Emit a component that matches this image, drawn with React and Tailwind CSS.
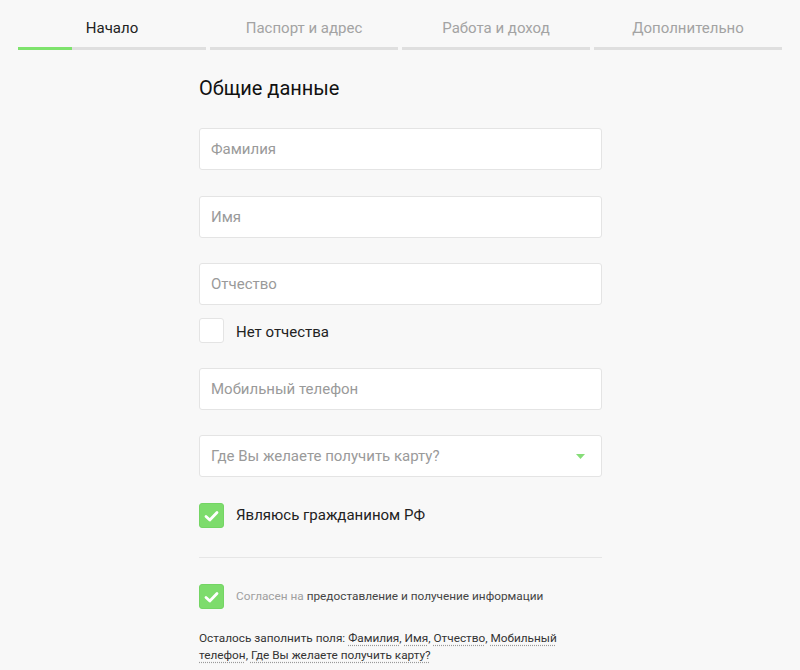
import { useState } from "react";

const tabs = ["Начало", "Паспорт и адрес", "Работа и доход", "Дополнительно"];

const Field = ({ placeholder, className = "" }) => (
    <input
        type="text"
        placeholder={placeholder}
        className={"block w-full h-[42px] bg-white border border-[#e4e4e4] rounded-[3px] px-[11px] text-[15px] text-[#222] placeholder:text-[#9a9a9a] outline-none " + className}
    />
);

const Check = ({ checked, onClick }) => (
    <button
        type="button"
        onClick={onClick}
        className={
            "w-[25px] h-[25px] rounded-[3px] border flex items-center justify-center shrink-0 " +
            (checked ? "bg-[#7ddc6c] border-[#74d564]" : "bg-white border-[#e4e4e4]")
        }
    >
        {checked && (
            <svg width="15" height="12" viewBox="0 0 15 12">
                <polyline points="2,6.5 5.8,10 13,2.5" fill="none" stroke="#fff" strokeWidth="2.8" strokeLinecap="round" strokeLinejoin="round" />
            </svg>
        )}
    </button>
);

const Dotted = ({ children }) => (
    <span className="text-[#333] underline decoration-dotted decoration-[#999] underline-offset-[3px]">{children}</span>
);

export default function App() {
    const [noMiddle, setNoMiddle] = useState(false);
    const [citizen, setCitizen] = useState(true);
    const [agree, setAgree] = useState(true);

    return (
        <div className="min-h-[670px] bg-[#f8f8f8] font-['Roboto','Liberation_Sans',sans-serif]">
            <div className="flex gap-[4px] px-[18px]">
                {tabs.map((t, i) => (
                    <div key={t} className="flex-1">
                        <div className={"text-center text-[15px] leading-[20px] pt-[18px] pb-[9px] " + (i === 0 ? "text-[#222]" : "text-[#a3a3a3]")}>
                            {t}
                        </div>
                        <div className="h-[3px] bg-[#dfdfdf]">
                            {i === 0 && <div className="h-full w-[54px] bg-[#7ee36d]" />}
                        </div>
                    </div>
                ))}
            </div>

            <div className="w-[403px] ml-[199px]">
                <h2 className="mt-[24px] text-[20px] leading-[28px] text-[#111]">Общие данные</h2>

                <Field placeholder="Фамилия" className="mt-[26px]" />
                <Field placeholder="Имя" className="mt-[26px]" />
                <Field placeholder="Отчество" className="mt-[25px]" />

                <div className="flex items-center gap-[12px] mt-[13px]">
                    <Check checked={noMiddle} onClick={() => setNoMiddle(!noMiddle)} />
                    <span className="text-[15px] leading-[20px] pt-[2px] text-[#222]">Нет отчества</span>
                </div>

                <Field placeholder="Мобильный телефон" className="mt-[25px]" />

                <div className="relative mt-[25px] h-[42px] bg-white border border-[#e4e4e4] rounded-[3px] flex items-center px-[11px]">
                    <span className="text-[15px] text-[#9a9a9a]">Где Вы желаете получить карту?</span>
                    <svg className="absolute right-[16px] top-[18px]" width="9" height="5" viewBox="0 0 9 5">
                        <polygon points="0,0 9,0 4.5,5" fill="#86dd78" />
                    </svg>
                </div>

                <div className="flex items-center gap-[12px] mt-[26px]">
                    <Check checked={citizen} onClick={() => setCitizen(!citizen)} />
                    <span className="text-[15px] text-[#222]">Являюсь гражданином РФ</span>
                </div>

                <div className="h-px bg-[#e6e6e6] mt-[29px]" />

                <div className="flex items-center gap-[12px] mt-[26px]">
                    <Check checked={agree} onClick={() => setAgree(!agree)} />
                    <span className="text-[11.8px] text-[#a0a0a0]">
                        Согласен на <span className="text-[#444]">предоставление и получение информации</span>
                    </span>
                </div>

                <p className="mt-[21px] text-[11.8px] leading-[17px] text-[#333]">
                    Осталось заполнить поля: <Dotted>Фамилия</Dotted>, <Dotted>Имя</Dotted>, <Dotted>Отчество</Dotted>, <Dotted>Мобильный телефон</Dotted>, <Dotted>Где Вы желаете получить карту?</Dotted>
                </p>
            </div>
        </div>
    );
}
